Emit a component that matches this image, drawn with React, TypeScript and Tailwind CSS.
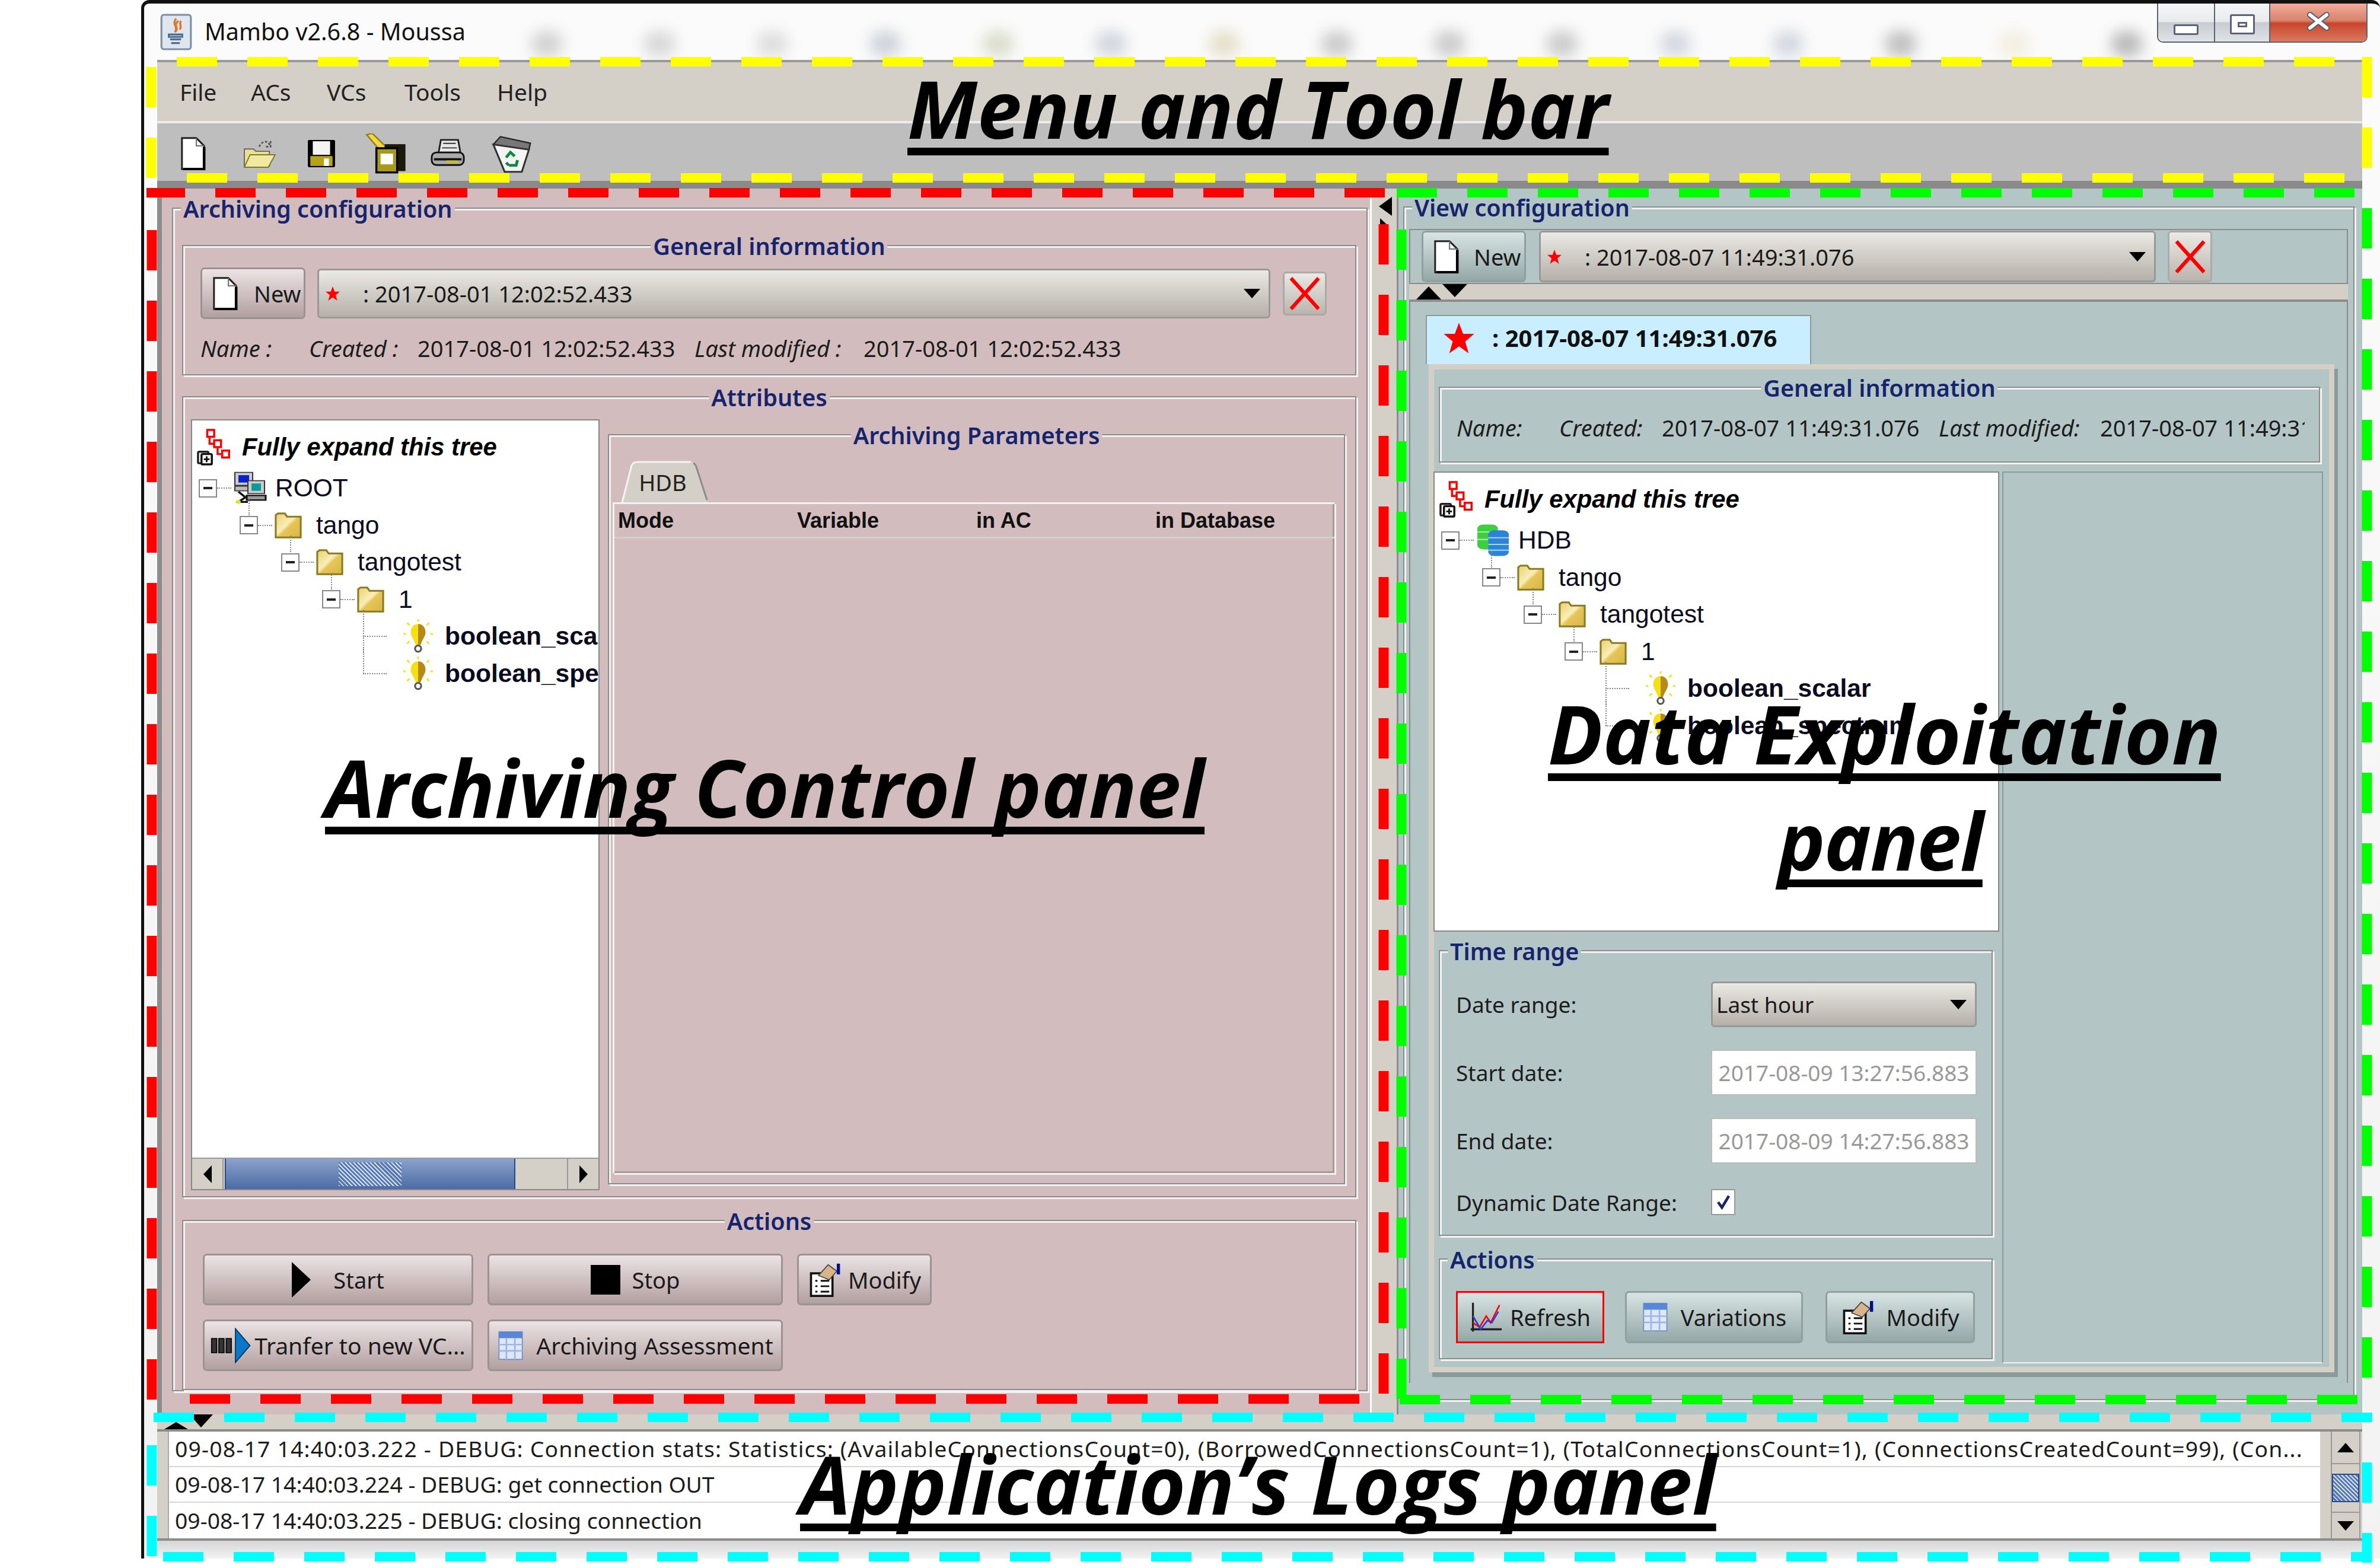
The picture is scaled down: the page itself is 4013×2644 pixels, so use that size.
import type { ReactNode } from 'react';

type Tone = 'pink' | 'teal';

const UI = "font-['Noto_Sans',sans-serif]";
const ARIAL = "font-['Liberation_Sans',sans-serif]";

const PageIcon = ({ className = 'w-[45px] h-[56px]' }: { className?: string }) => (
  <svg viewBox="0 0 24 30" className={className}>
    <path d="M2 1h13l7 7v21H2z" fill="#fff" stroke="#222" strokeWidth="1.6" />
    <path d="M15 1v7h7" fill="none" stroke="#777" strokeWidth="1.2" />
    <path d="M3 29h19V9" fill="none" stroke="#000" strokeWidth="2.4" />
  </svg>
);

const StarIcon = ({ className }: { className: string }) => (
  <svg viewBox="0 0 24 24" className={className}>
    <path d="M12 1l3 8h8l-6.500 5.500 2.500 8.500-7-5-7 5 2.500-8.500L1 9h8z" fill="#f00" />
  </svg>
);

const CrossIcon = ({ className }: { className: string }) => (
  <svg viewBox="0 0 24 24" className={className}>
    <path d="M3 2l18 20M21 2L3 22" stroke="#f00" strokeWidth="2.400" fill="none" />
  </svg>
);

const Tri = ({ dir, className }: { dir: 'up' | 'down' | 'left' | 'right'; className: string }) => {
  const d = { up: 'M0 12L8 0l8 12z', down: 'M0 0h16L8 12z', left: 'M12 0v16L0 8z', right: 'M0 0l12 8L0 16z' }[dir];
  const box = dir === 'up' || dir === 'down' ? '0 0 16 12' : '0 0 12 16';
  return (
    <svg viewBox={box} preserveAspectRatio="none" className={className}>
      <path d={d} fill="#000" />
    </svg>
  );
};

const FolderIcon = () => (
  <svg viewBox="0 0 24 24" preserveAspectRatio="none" className="w-[46px] h-[44px] shrink-0">
    <defs>
      <linearGradient id="fold" x1="0" y1="0" x2="1" y2="1">
        <stop offset="0" stopColor="#ecd070" />
        <stop offset="0.45" stopColor="#f8eeb8" />
        <stop offset="0.55" stopColor="#e6c558" />
        <stop offset="1" stopColor="#d9b545" />
      </linearGradient>
    </defs>
    <path d="M1 6V2.500L3 1h6l2 3h12v19H1z" fill="url(#fold)" stroke="#8a7a20" strokeWidth="1.600" />
  </svg>
);

const BulbIcon = () => (
  <svg viewBox="0 0 24 28" className="w-[50px] h-[58px] shrink-0">
    <path d="M12 4c4 0 6 3 6 7 0 3-3 6-4 10h-4C9 17 6 14 6 11c0-4 2-7 6-7z" fill="#f7e011" />
    <path d="M12 4c4 0 6 3 6 7 0 3-3 6-4 10h-2z" fill="#b58a1a" />
    <circle cx="12" cy="24" r="2.500" fill="none" stroke="#555" strokeWidth="1.500" />
    <path d="M12 0v2M3 3l2 2M21 3l-2 2M0 12h2M22 12h2M3 20l2-2M21 20l-2-2" stroke="#f3e23a" strokeWidth="1.500" />
  </svg>
);

const ServersIcon = () => (
  <svg viewBox="0 0 28 36" preserveAspectRatio="none" className="w-[56px] h-[56px] shrink-0">
    <rect x="1" y="1" width="15" height="14" fill="#ccc" stroke="#333" />
    <rect x="4" y="4" width="9" height="8" fill="#0a20c8" />
    <rect x="1" y="16" width="14" height="5" fill="#bbb" stroke="#333" />
    <rect x="12" y="10" width="14" height="14" fill="#ccc" stroke="#333" />
    <rect x="15" y="13" width="8" height="8" fill="#0e9a9a" />
    <rect x="11" y="26" width="16" height="5" fill="#999" stroke="#111" strokeWidth="1.500" />
    <path d="M4 22l6 6-6 5M2 33h10" stroke="#111" strokeWidth="2" fill="none" />
    <circle cx="4" cy="33" r="2" fill="#e6e600" />
  </svg>
);

const DbIcon = () => (
  <svg viewBox="0 0 28 40" preserveAspectRatio="none" className="w-[57px] h-[56px] shrink-0">
    <rect x="1" y="1" width="17" height="30" rx="5" fill="#3fce3f" />
    <path d="M1 10h17M1 19h17" stroke="#a4efa4" strokeWidth="1.500" />
    <rect x="10" y="8" width="17" height="31" rx="5" fill="#2b84d8" />
    <path d="M10 17h17M10 25h17M10 32h17" stroke="#a7d6f7" strokeWidth="1.500" />
  </svg>
);

const ExpandTreeIcon = () => (
  <svg viewBox="0 0 32 32" className="w-[62px] h-[62px] shrink-0">
    <g fill="#fff" stroke="#f00" strokeWidth="1.800">
      <rect x="9" y="1" width="6" height="6" />
      <rect x="15" y="10" width="6" height="6" />
      <rect x="22" y="19" width="6" height="6" />
    </g>
    <path d="M11 7v6h4M18 16v6h4" fill="none" stroke="#f00" strokeWidth="1.800" />
    <rect x="1" y="20" width="9" height="10" rx="1" fill="#fff" stroke="#222" strokeWidth="1.800" />
    <rect x="4" y="22" width="9" height="9" rx="1" fill="#fff" stroke="#111" strokeWidth="1.800" />
    <path d="M8.500 24v5M6 26.500h5" stroke="#111" strokeWidth="1.500" />
  </svg>
);

const TableIcon = () => (
  <svg viewBox="0 0 24 28" className="w-[46px] h-[50px] shrink-0">
    <rect x="1" y="1" width="22" height="26" fill="#dfe8fb" stroke="#6f8fc4" />
    <rect x="1" y="1" width="22" height="6" fill="#5a86d6" />
    <path d="M8 7v20M16 7v20M1 13h22M1 19h22" stroke="#9fb6e2" strokeWidth="1.500" />
  </svg>
);

const ModifyIcon = () => (
  <svg viewBox="0 0 30 32" className="w-[58px] h-[58px] shrink-0">
    <rect x="2" y="10" width="20" height="21" fill="#fff" stroke="#111" strokeWidth="2" />
    <path d="M6 17h2M11 17h8M6 22h2M11 22h8M6 27h2M11 27h8" stroke="#111" strokeWidth="1.600" />
    <path d="M9 12l9-10 8 6-7 8z" fill="#d8b48a" stroke="#444" />
    <rect x="26" y="1" width="3" height="10" fill="#00108a" />
  </svg>
);

const ChartIcon = () => (
  <svg viewBox="0 0 30 30" className="w-[56px] h-[56px] shrink-0">
    <path d="M3 2v26M1 26h28" stroke="#222" strokeWidth="1.800" fill="none" />
    <path d="M3 20l6 4 6-10 4 6 8-16" stroke="#f00" strokeWidth="1.400" fill="none" />
    <path d="M3 14l7 12 6-8 4 2 6-10" stroke="#2a3ae0" strokeWidth="1.400" fill="none" />
  </svg>
);

const TransferIcon = () => (
  <svg viewBox="0 0 40 40" preserveAspectRatio="none" className="w-[70px] h-[60px] shrink-0">
    <g fill="#333" stroke="#000">
      <rect x="1" y="12" width="5" height="16" />
      <rect x="8" y="12" width="5" height="16" />
      <rect x="15" y="12" width="5" height="16" />
    </g>
    <path d="M24 1l14 19-14 19z" fill="#0a78c8" stroke="#035" />
  </svg>
);

const OpenIcon = () => (
  <svg viewBox="0 0 30 26" className="w-[58px] h-[50px]">
    <path d="M2 9h8l2 2h12v13H2z" fill="#ece090" stroke="#666" />
    <path d="M2 25l5-11h22l-6 11z" fill="#f2e9a0" stroke="#7a7a30" />
    <path d="M15 7c3-6 8-6 10 0M25 2v5h-5" stroke="#555" fill="none" strokeDasharray="2 1.500" strokeWidth="1.400" />
  </svg>
);

const FloppyIcon = () => (
  <svg viewBox="0 0 24 24" className="w-[50px] h-[50px]" preserveAspectRatio="none">
    <rect x="1" y="1" width="22" height="22" rx="1" fill="#000" />
    <rect x="5" y="2" width="14" height="11" fill="#f4f4f4" />
    <rect x="3" y="14" width="18" height="8" fill="#b6a416" />
    <rect x="14" y="16" width="4" height="6" fill="#fff" />
  </svg>
);

const SaveAsIcon = () => (
  <svg viewBox="0 0 30 30" className="w-[70px] h-[68px]" preserveAspectRatio="none">
    <path d="M1 1l10 12 4-3L5 0z" fill="#f3d838" stroke="#8a7a20" />
    <rect x="14" y="8" width="15" height="20" fill="#1a1a0a" />
    <rect x="8" y="11" width="15" height="18" fill="#a89a18" stroke="#000" strokeWidth="1.500" />
    <rect x="11" y="15" width="9" height="8" fill="#fff" />
  </svg>
);

const PrintIcon = () => (
  <svg viewBox="0 0 30 26" className="w-[58px] h-[50px]" preserveAspectRatio="none">
    <path d="M9 1h15l2 11H7z" fill="#e8e8e8" stroke="#222" strokeWidth="1.500" />
    <path d="M11 4h11M10 8h13" stroke="#333" />
    <rect x="1" y="12" width="28" height="11" rx="4" fill="#aaa" stroke="#111" strokeWidth="1.500" />
    <rect x="3" y="17" width="24" height="2" fill="#111" />
    <rect x="14" y="19" width="10" height="2" fill="#c8c020" />
  </svg>
);

const TrashIcon = () => (
  <svg viewBox="0 0 30 30" className="w-[72px] h-[66px]" preserveAspectRatio="none">
    <path d="M2 8L7 2l21 5-1 5z" fill="#777" stroke="#222" />
    <path d="M2 8l25 4-5 17-12 0z" fill="#f4f4f4" stroke="#333" strokeWidth="1.300" />
    <path d="M11 18l3-4 3 3M19 20l-1 4h-5M11 22l2 2" stroke="#0a8a3a" strokeWidth="2" fill="none" />
  </svg>
);

const JavaIcon = () => (
  <svg viewBox="0 0 26 30" className="w-[56px] h-[62px] shrink-0">
    <rect x="1" y="1" width="24" height="28" rx="2" fill="#dfe6ee" stroke="#7b8ea3" strokeWidth="1.500" />
    <path d="M13 4c-4 5 2 6-1 11 4-3-2-6 3-9M17 6c-2 2 1 4-1 7" stroke="#e0752a" strokeWidth="1.600" fill="none" />
    <path d="M7 17h11v2H7zM8 21h9M9 24h7" stroke="#4c6f93" strokeWidth="1.500" fill="none" />
  </svg>
);

const Expander = () => (
  <span className="flex items-center justify-center w-[31px] h-[31px] border-2 border-[#888] bg-white shrink-0">
    <span className="w-[15px] h-[4px] bg-[#222]" />
  </span>
);

const Dots = ({ className }: { className: string }) => <span className={`border-dotted border-[#888] ${className}`} />;

const INDENTS = ['pl-[11px]', 'pl-[80px]', 'pl-[150px]', 'pl-[219px]'];

const TreeBranch = ({ depth, icon, label }: { depth: number; icon: ReactNode; label: string }) => (
  <div className={`relative flex items-center h-[62.5px] ${INDENTS[depth]}`}>
    <Expander />
    <Dots className="w-[24px] border-t-2 mr-[4px]" />
    {icon}
    <span className={`whitespace-nowrap ${depth === 0 ? 'ml-[14px]' : 'ml-[24px]'}`}>{label}</span>
    {depth > 0 && <Dots className="absolute top-[-14px] h-[28px] border-l-2 ml-[15px]" />}
  </div>
);

const TreeLeaf = ({ label, last }: { label: string; last?: boolean }) => (
  <div className="relative flex items-center h-[62.5px] pl-[288px]">
    <Dots className={`absolute left-[288px] top-[-14px] border-l-2 ${last ? 'h-[45px]' : 'h-[76px]'}`} />
    <Dots className="w-[40px] border-t-2 mr-[28px] shrink-0" />
    <BulbIcon />
    <span className="ml-[20px] font-bold whitespace-nowrap">{label}</span>
  </div>
);

const Tree = ({ root, rootIcon }: { root: string; rootIcon: ReactNode }) => (
  <div className={`overflow-hidden text-[42.500px] leading-none text-[#0b0b20] ${ARIAL}`}>
    <div className="flex items-center gap-[14px] pl-[8px] pt-[6px] h-[83px]">
      <ExpandTreeIcon />
      <span className="text-[41.800px] font-bold italic text-black whitespace-nowrap">Fully expand this tree</span>
    </div>
    <TreeBranch depth={0} icon={rootIcon} label={root} />
    <TreeBranch depth={1} icon={<FolderIcon />} label="tango" />
    <TreeBranch depth={2} icon={<FolderIcon />} label="tangotest" />
    <TreeBranch depth={3} icon={<FolderIcon />} label="1" />
    <TreeLeaf label="boolean_scalar" />
    <TreeLeaf label="boolean_spectrum" last />
  </div>
);

const Group = ({
  title,
  tone,
  center,
  className,
  children,
}: {
  title: string;
  tone: Tone;
  center?: boolean;
  className: string;
  children?: ReactNode;
}) => (
  <div
    className={`relative border-2 border-[#8c8c8c] shadow-[inset_3px_3px_0_#f2f2f2,3px_3px_0_#f2f2f2] shrink-0 ${className}`}
  >
    <span
      className={`absolute top-[-24px] h-[50px] px-[4px] flex items-center text-[39.500px] leading-none font-semibold text-[#16246e] whitespace-nowrap ${UI} ${
        tone === 'pink' ? 'bg-[#d2bcbd]' : 'bg-[#b3c6c5]'
      } ${center ? 'left-1/2 -translate-x-1/2' : 'left-[13px]'}`}
    >
      {title}
    </span>
    {children}
  </div>
);

const Button = ({
  tone,
  icon,
  label,
  className,
}: {
  tone: Tone;
  icon: ReactNode;
  label: string;
  className: string;
}) => (
  <div
    className={`flex items-center justify-center gap-[20px] rounded-[7px] border-[3px] text-[38px] leading-none text-[#1a1a1a] whitespace-nowrap ${UI} ${
      tone === 'pink'
        ? 'border-[#9b9393] bg-gradient-to-b from-[#ece3e4] to-[#b3a0a1]'
        : 'border-[#8fa09f] bg-gradient-to-b from-[#d8e4e3] to-[#94a8a7]'
    } ${className}`}
  >
    {icon}
    <span>{label}</span>
  </div>
);

const Combo = ({ star, label, className }: { star?: boolean; label: string; className: string }) => (
  <div
    className={`flex items-center rounded-[6px] border-[3px] border-[#999] bg-gradient-to-b from-[#ebe9e4] to-[#b5b1a9] text-[38px] leading-none text-[#1a1a1a] ${UI} ${className}`}
  >
    {star && <StarIcon className="w-[26px] h-[34px] ml-[10px] mr-[38px]" />}
    <span className={`flex-1 whitespace-nowrap ${star ? '' : 'pl-[6px]'}`}>{label}</span>
    <Tri dir="down" className="w-[28px] h-[16px] mr-[14px]" />
  </div>
);

const CloseButton = ({ className }: { className: string }) => (
  <div
    className={`flex items-center justify-center rounded-[6px] border-[3px] border-[#aaa] bg-gradient-to-b from-[#ece9e4] to-[#bab6ae] ${className}`}
  >
    <CrossIcon className="w-[62px] h-[68px]" />
  </div>
);

const Scrollbar = () => (
  <div className="flex h-[53px] border-t-2 border-[#999] bg-[#d4d0c8] mt-auto">
    <div className="flex items-center justify-center w-[53px] border-r-2 border-[#999]">
      <Tri dir="left" className="w-[14px] h-[30px]" />
    </div>
    <div className="flex items-center justify-center w-[490px] ml-[2px] border-x-2 border-[#274a8c] bg-gradient-to-b from-[#8aa3cb] to-[#4d6ba5]">
      <span className="w-[106px] h-[40px] bg-[repeating-linear-gradient(45deg,#cfe0f4_0_2px,#5a78ad_2px_5px)]" />
    </div>
    <div className="flex-1" />
    <div className="flex items-center justify-center w-[53px] border-l-2 border-[#999]">
      <Tri dir="right" className="w-[14px] h-[30px]" />
    </div>
  </div>
);

const HdbTab = () => (
  <div className={`relative flex items-center justify-center w-[147px] h-[70px] ml-[14px] text-[38px] leading-none text-[#222] ${UI}`}>
    <svg viewBox="0 0 147 70" className="absolute inset-0 w-full h-full">
      <path d="M2 70L18 8Q20 2 28 2H118Q124 2 126 8L146 70z" fill="#d4d0c8" />
      <path d="M2 70L18 8Q20 2 28 2H118" fill="none" stroke="#f4f4f4" strokeWidth="3" />
      <path d="M122 4Q125 5 127 10L145 66" fill="none" stroke="#8c8c8c" strokeWidth="3" />
    </svg>
    <span className="relative mr-[6px] mt-[2px]">HDB</span>
  </div>
);

const ArchivingPanel = () => (
  <div className="w-[2045px] shrink-0 bg-[#d2bcbd] border-l-[8px] border-[#8c8c8c] pl-[17px] pt-[32px]">
    <Group title="Archiving configuration" tone="pink" className="w-[2016px] h-[1996px] pl-[15px] pt-[61px]">
      <Group title="General information" tone="pink" center className="w-[1980px] h-[220px] pl-[29px] pt-[36px]">
        <div className="flex items-center">
          <Button
            tone="pink"
            icon={<PageIcon />}
            label="New"
            className="w-[177px] h-[87px] !gap-[26px] !justify-start pl-[16px]"
          />
          <Combo star label=": 2017-08-01 12:02:52.433" className="w-[1607px] h-[84px] ml-[20px]" />
          <CloseButton className="w-[74px] h-[74px] ml-[21px]" />
        </div>
        <div className={`flex items-center mt-[24px] h-[50px] text-[38px] leading-none text-[#1c1c1c] whitespace-nowrap ${UI}`}>
          <i className="w-[183px]">Name :</i>
          <i className="w-[183px]">Created :</i>
          <span className="w-[467px]">2017-08-01 12:02:52.433</span>
          <i className="w-[285px]">Last modified :</i>
          <span>2017-08-01 12:02:52.433</span>
        </div>
      </Group>
      <Group title="Attributes" tone="pink" center className="w-[1980px] h-[1351px] mt-[35px] flex pl-[13px] pt-[37px]">
        <div className="w-[689px] h-[1300px] bg-white border-2 border-[#888] flex flex-col shrink-0">
          <Tree root="ROOT" rootIcon={<ServersIcon />} />
          <Scrollbar />
        </div>
        <Group
          title="Archiving Parameters"
          tone="pink"
          center
          className="w-[1243px] h-[1265px] ml-[14px] mt-[25px] pl-[6px] pt-[43px]"
        >
          <HdbTab />
          <div className="w-[1217px] h-[1131px] border-l-[3px] border-t-[3px] border-[#f2f2f2] shadow-[inset_-3px_-3px_0_#a99a9a,3px_3px_0_#f2f2f2]">
            <div className={`grid grid-cols-4 items-center h-[58px] pl-[6px] border-b-[3px] border-[#d4d0c8] text-[36px] leading-none font-bold text-[#111] ${ARIAL}`}>
              <span>Mode</span>
              <span>Variable</span>
              <span>in AC</span>
              <span>in Database</span>
            </div>
          </div>
        </Group>
      </Group>
      <Group title="Actions" tone="pink" center className="w-[1980px] h-[287px] mt-[38px] pl-[33px] pt-[55px]">
        <div className="flex gap-[24px]">
          <Button
            tone="pink"
            icon={<Tri dir="right" className="w-[32px] h-[60px]" />}
            label="Start"
            className="w-[456px] h-[87px] !gap-[38px]"
          />
          <Button
            tone="pink"
            icon={<span className="block w-[50px] h-[50px] bg-black" />}
            label="Stop"
            className="w-[498px] h-[87px]"
          />
          <Button
            tone="pink"
            icon={<ModifyIcon />}
            label="Modify"
            className="w-[227px] h-[87px] !gap-[10px]"
          />
        </div>
        <div className="flex gap-[24px] mt-[24px]">
          <Button
            tone="pink"
            icon={<TransferIcon />}
            label="Tranfer to new VC..."
            className="w-[456px] h-[87px] !gap-[4px] !text-[39px]"
          />
          <Button
            tone="pink"
            icon={<TableIcon />}
            label="Archiving Assessment"
            className="w-[498px] h-[87px] !gap-[20px] !text-[39px]"
          />
        </div>
      </Group>
    </Group>
  </div>
);

const FieldRow = ({ label, children }: { label: string; children: ReactNode }) => (
  <div className="flex items-center h-[77px]">
    <span className="w-[430px] text-[37px] leading-none text-[#1c1c1c] whitespace-nowrap">{label}</span>
    {children}
  </div>
);

const DateInput = ({ value }: { value: string }) => (
  <div className="flex items-center justify-center w-[448px] h-[77px] bg-white border-2 border-[#bbb] text-[37px] leading-none text-[#999] whitespace-nowrap">
    {value}
  </div>
);

const ExploitationPanel = () => (
  <div className="w-[1628px] shrink-0 bg-[#b3c6c5] border-l-[3px] border-[#8c8c8c] pl-[8px] pt-[30px]">
    <Group title="View configuration" tone="teal" className="w-[1604px] h-[2013px] pl-[8px] pt-[36px]">
      <div className="flex items-center w-[1583px] h-[93px] pl-[19px] border-2 border-[#8c8c8c]">
        <Button
          tone="teal"
          icon={<PageIcon />}
          label="New"
          className="w-[176px] h-[87px] !gap-[24px] !justify-start pl-[16px]"
        />
        <Combo star label=": 2017-08-07 11:49:31.076" className="w-[1040px] h-[87px] ml-[22px]" />
        <CloseButton className="w-[75px] h-[87px] ml-[20px]" />
      </div>
      <div className="flex items-end gap-[2px] w-[1583px] h-[26px] pl-[12px] bg-[#d4d0c8]">
        <Tri dir="up" className="w-[42px] h-[22px]" />
        <Tri dir="down" className="w-[42px] h-[22px] self-start" />
      </div>
      <div className="w-[1583px] h-[1827px] border-t-4 border-x-2 border-[#8c8c8c] pt-[22px] pl-[26px]">
        <div className={`flex items-center w-[650px] h-[83px] pl-[26px] pb-[8px] border-2 border-b-0 border-[#8c9a9a] bg-[#c8eeff] text-[40px] leading-none font-bold text-[#111] whitespace-nowrap ${UI}`}>
          <StarIcon className="w-[56px] h-[56px] mr-[28px]" />
          : 2017-08-07 11:49:31.076
        </div>
        <div className="w-[1527px] h-[1700px] ml-[5px] border-[9px] border-[#d4d0c8] shadow-[6px_8px_0_#8c9a9a]">
          <Group title="General information" tone="teal" center className="w-[1486px] h-[128px] ml-[8px] mt-[29px] pl-[28px] pt-[42px]">
            <div className={`flex items-center h-[50px] w-[1430px] overflow-hidden text-[38px] leading-none text-[#1c1c1c] whitespace-nowrap ${UI}`}>
              <i className="w-[173px] shrink-0">Name:</i>
              <i className="w-[173px] shrink-0">Created:</i>
              <span className="w-[467px] shrink-0">2017-08-07 11:49:31.076</span>
              <i className="w-[272px] shrink-0">Last modified:</i>
              <span>2017-08-07 11:49:31.076</span>
            </div>
          </Group>
          <div className="flex mt-[15px] -ml-[1px]">
            <div className="w-[954px] shrink-0">
              <div className="h-[776px] bg-white border-2 border-[#888]">
                <Tree root="HDB" rootIcon={<DbIcon />} />
              </div>
              <Group title="Time range" tone="teal" className={`w-[934px] h-[482px] ml-[9px] mt-[31px] pl-[27px] pt-[51px] ${UI}`}>
                <div className="flex flex-col gap-[38px]">
                  <FieldRow label="Date range:">
                    <Combo label="Last hour" className="w-[448px] h-[77px] !text-[37px]" />
                  </FieldRow>
                  <FieldRow label="Start date:">
                    <DateInput value="2017-08-09 13:27:56.883" />
                  </FieldRow>
                  <FieldRow label="End date:">
                    <DateInput value="2017-08-09 14:27:56.883" />
                  </FieldRow>
                </div>
                <div className="flex items-center h-[44px] mt-[43px]">
                  <span className="w-[430px] text-[37px] leading-none text-[#1c1c1c] whitespace-nowrap">Dynamic Date Range:</span>
                  <span className="flex items-center justify-center w-[41px] h-[44px] bg-white border-2 border-[#999]">
                    <svg viewBox="0 0 20 20" className="w-[26px] h-[30px]">
                      <path d="M3 10l5 7L17 2" stroke="#14246e" strokeWidth="3.500" fill="none" />
                    </svg>
                  </span>
                </div>
              </Group>
              <Group title="Actions" tone="teal" className="w-[934px] h-[170px] ml-[9px] mt-[38px] pl-[27px] pt-[53px]">
                <div className="flex">
                  <Button
                    tone="teal"
                    icon={<ChartIcon />}
                    label="Refresh"
                    className="w-[250px] h-[88px] !rounded-none !border-[#f00] !gap-[12px]"
                  />
                  <Button
                    tone="teal"
                    icon={<TableIcon />}
                    label="Variations"
                    className="w-[300px] h-[88px] ml-[35px] !gap-[20px]"
                  />
                  <Button
                    tone="teal"
                    icon={<ModifyIcon />}
                    label="Modify"
                    className="w-[252px] h-[88px] ml-[38px] !gap-[18px]"
                  />
                </div>
              </Group>
            </div>
            <div className="w-[541px] h-[1504px] ml-[5px] border-2 border-[#8c9a9a] border-b-[#f2f2f2]" />
          </div>
        </div>
      </div>
    </Group>
  </div>
);

const LOGS = [
  '09-08-17 14:40:03.222 - DEBUG: Connection stats: Statistics: (AvailableConnectionsCount=0), (BorrowedConnectionsCount=1), (TotalConnectionsCount=1), (ConnectionsCreatedCount=99), (Con...',
  '09-08-17 14:40:03.224 - DEBUG: get connection OUT',
  '09-08-17 14:40:03.225 - DEBUG: closing connection',
];

const LogsPanel = () => (
  <div className="flex-1 flex flex-col">
    <div className="flex items-end h-[25px] pl-[12px] gap-[2px] bg-[#d4d0c8]">
      <Tri dir="up" className="w-[40px] h-[12px]" />
      <Tri dir="down" className="w-[40px] h-[22px] self-start" />
    </div>
    <div className="flex h-[188px] border-y-4 border-[#8c8c8c] bg-[#d4d0c8]">
      <div className="w-[20px] shrink-0 border-r-2 border-[#aaa]" />
      <div className={`w-[3627px] shrink-0 bg-white text-[37.300px] leading-none text-[#1c1c1c] ${UI}`}>
        {LOGS.map((log) => (
          <div
            key={log}
            className="flex items-center h-[60px] pl-[10px] border-b-2 border-[#d8d8d8] first:tracking-[1.2px] last:border-b-0 whitespace-nowrap"
          >
            {log}
          </div>
        ))}
      </div>
      <div className="w-[18px] shrink-0" />
      <div className="flex flex-col w-[50px] shrink-0 border-x-2 border-[#999]">
        <div className="flex items-center justify-center h-[55px] border-b-2 border-[#999]">
          <Tri dir="up" className="w-[28px] h-[16px]" />
        </div>
        <div className="flex-1 flex items-center">
          <span className="w-full h-[48px] border-2 border-[#274a8c] bg-[repeating-linear-gradient(45deg,#cfe0f4_0_2px,#5a78ad_2px_5px)]" />
        </div>
        <div className="flex items-center justify-center h-[45px] border-t-2 border-[#999]">
          <Tri dir="down" className="w-[28px] h-[16px]" />
        </div>
      </div>
    </div>
    <div className="flex-1 bg-gradient-to-b from-[#d6d6d6] to-[#f2f2f2]" />
  </div>
);

const BLURS = ['#888', '#999', '#aaa', '#7d8ca0', '#a4a878', '#8d94b0', '#bdb074', '#777', '#777', '#777', '#8e9ab0', '#8e9ab0', '#555', '#e8d8b0', '#444'];

const TitleBar = () => (
  <div className="relative flex items-center h-[95px] pl-[26px] overflow-hidden">
    <JavaIcon />
    <span className={`ml-[20px] text-[39.500px] leading-none text-[#111] whitespace-nowrap ${UI}`}>
      Mambo v2.6.8 - Moussa
    </span>
    <div className="flex justify-between flex-1 ml-[110px] mr-[400px] opacity-35">
      {BLURS.map((color, i) => (
        <span key={i} className="w-[54px] h-[44px] mt-[40px] rounded-full blur-[12px]" style={{ background: color }} />
      ))}
    </div>
    <div className="absolute top-0 right-[21px] flex h-[66px] rounded-b-[10px] border-2 border-t-0 border-[#5b6370] overflow-hidden">
      <div className="flex items-center justify-center w-[96px] border-r-2 border-[#5b6370] bg-[linear-gradient(#f4f6f8_0%,#e8eaec_48%,#c8ccd0_50%,#dfe3e8_100%)]">
        <span className="block w-[42px] h-[18px] mt-[24px] rounded-[3px] border-[3px] border-[#5b6478] bg-white" />
      </div>
      <div className="flex items-center justify-center w-[93px] border-r-2 border-[#5b6370] bg-[linear-gradient(#f4f6f8_0%,#e8eaec_48%,#c8ccd0_50%,#dfe3e8_100%)]">
        <span className="flex items-center justify-center w-[42px] h-[34px] mt-[6px] rounded-[3px] border-[3px] border-[#5b6478] bg-white">
          <span className="block w-[16px] h-[9px] border-[3px] border-[#5b6478]" />
        </span>
      </div>
      <div className="flex items-center justify-center w-[162px] bg-[linear-gradient(#f3ab9b_0%,#d8826c_45%,#c8442a_52%,#d97a62_100%)]">
        <svg viewBox="0 0 40 30" className="w-[40px] h-[32px] mb-[4px]">
          <path d="M6 4l28 22M34 4L6 26" stroke="#59626e" strokeWidth="10" strokeLinecap="round" />
          <path d="M6 4l28 22M34 4L6 26" stroke="#fff" strokeWidth="6" strokeLinecap="round" />
        </svg>
      </div>
    </div>
  </div>
);

const MENUS = [
  ['File', 'w-[120px]'],
  ['ACs', 'w-[128px]'],
  ['VCs', 'w-[131px]'],
  ['Tools', 'w-[156px]'],
  ['Help', 'w-[90px]'],
];

const MenuBars = () => (
  <>
    <div className={`flex items-center h-[103px] pl-[38px] border-t-4 border-[#9a9a9a] bg-[#d4d0c8] text-[39px] leading-none text-[#222] ${UI}`}>
      {MENUS.map(([name, width]) => (
        <span key={name} className={width}>
          {name}
        </span>
      ))}
    </div>
    <div className="h-[4px] bg-[#ececec]" />
    <div className="flex items-center h-[97px] pl-[38px] pt-[4px] bg-[#bebebe]">
      <PageIcon className="w-[45px] h-[56px] mr-[60px]" />
      <OpenIcon />
      <span className="w-[51px]" />
      <FloppyIcon />
      <span className="w-[49px]" />
      <SaveAsIcon />
      <span className="w-[40px]" />
      <PrintIcon />
      <span className="w-[43px]" />
      <TrashIcon />
    </div>
    <div className="h-[13px] bg-[#8a8a8a]" />
  </>
);

const Splitter = () => (
  <div className="relative w-[45px] shrink-0 bg-[#d4d0c8] border-l-[3px] border-white">
    <Tri dir="left" className="absolute left-[12px] top-[14px] w-[22px] h-[32px]" />
    <Tri dir="right" className="absolute left-[14px] top-[50px] w-[14px] h-[26px]" />
  </div>
);

// annotation dashes: [x1, y1, x2, y2, colour]
const DASHES: [number, number, number, number, string][] = [
  [298, 104, 3995, 104, '#ffff00'],
  [315, 300, 3960, 300, '#ffff00'],
  [255, 113, 255, 300, '#ffff00'],
  [3991, 96, 3991, 300, '#ffff00'],
  [363, 325, 2342, 325, '#ff0000'],
  [247, 325, 312, 325, '#ff0000'],
  [320, 2359, 2340, 2359, '#ff0000'],
  [256, 388, 256, 2366, '#ff0000'],
  [2333, 378, 2333, 2359, '#ff0000'],
  [2355, 325, 3980, 325, '#00ff00'],
  [2360, 2360, 3980, 2360, '#00ff00'],
  [2363, 387, 2363, 2360, '#00ff00'],
  [3991, 351, 3991, 2360, '#00ff00'],
  [259, 2390, 4000, 2390, '#00ffff'],
  [275, 2625, 3995, 2625, '#00ffff'],
  [256, 2437, 256, 2632, '#00ffff'],
  [3991, 2466, 3991, 2635, '#00ffff'],
];

const Caption = ({ className, children }: { className: string; children: ReactNode }) => (
  <span
    className={`absolute font-['Open_Sans',sans-serif] text-[134px] font-bold italic leading-[1.2] text-black underline decoration-[13px] underline-offset-[15px] [text-decoration-skip-ink:none] whitespace-nowrap ${className}`}
  >
    {children}
  </span>
);

const Annotations = () => (
  <>
    <svg className="absolute inset-0 w-full h-full pointer-events-none" viewBox="0 0 4013 2644">
      {DASHES.map(([x1, y1, x2, y2, color]) => (
        <line
          key={`${x1}-${y1}`}
          x1={x1}
          y1={y1}
          x2={x2}
          y2={y2}
          stroke={color}
          strokeWidth={y1 === y2 ? 16 : 17}
          strokeDasharray="68 51"
        />
      ))}
    </svg>
    <Caption className="left-[1530px] top-[102px]">Menu and Tool bar</Caption>
    <Caption className="left-[548px] top-[1247px]">Archiving Control panel</Caption>
    <Caption className="left-[2610px] top-[1154px] !text-[137px]">Data Exploitation</Caption>
    <Caption className="left-[2998px] top-[1336px] tracking-[-2px]">panel</Caption>
    <Caption className="left-[1349px] top-[2420px] !text-[136px]">Application’s Logs panel</Caption>
  </>
);

export default function App() {
  return (
    <div className="relative w-[4013px] h-[2644px] bg-white overflow-hidden">
      <div className="ml-[238px] w-[3775px] h-[2628px] flex flex-col rounded-t-[14px] border-l-[5px] border-t-[6px] border-[#111] bg-gradient-to-b from-[#fbfbfb] to-[#f2f2f2]">
        <TitleBar />
        <div className="flex-1 flex flex-col ml-[22px] mr-[30px]">
          <MenuBars />
          <div className="flex h-[2067px]">
            <ArchivingPanel />
            <Splitter />
            <ExploitationPanel />
          </div>
          <LogsPanel />
        </div>
      </div>
      <Annotations />
    </div>
  );
}
